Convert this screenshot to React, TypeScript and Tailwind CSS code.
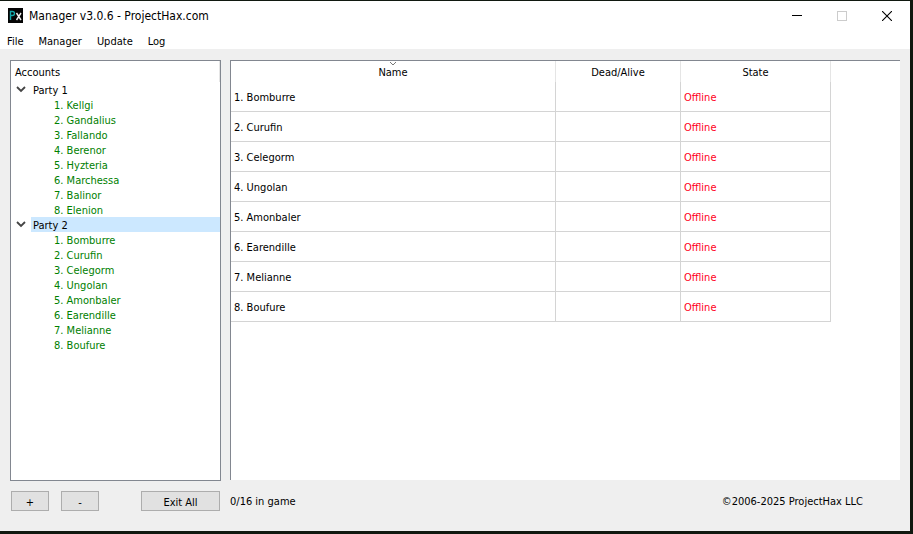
import React from "react";

type Party = { name: string; selected: boolean; members: string[] };

const parties: Party[] = [
  {
    name: "Party 1",
    selected: false,
    members: ["Kellgi", "Gandalius", "Fallando", "Berenor", "Hyzteria", "Marchessa", "Balinor", "Elenion"],
  },
  {
    name: "Party 2",
    selected: true,
    members: ["Bomburre", "Curufin", "Celegorm", "Ungolan", "Amonbaler", "Earendille", "Melianne", "Boufure"],
  },
];

const menus = ["File", "Manager", "Update", "Log"];

function TitleBar() {
  return (
    <header className="flex h-[29px] shrink-0 items-center bg-white pl-2">
      <svg width="15" height="15" viewBox="0 0 15 15" aria-hidden="true">
        <rect width="15" height="15" fill="#050505" />
        <path d="M2.5 12V3.5H4.3Q6.5 3.5 6.5 5.5T4.3 7.5H2.5" fill="none" stroke="#14a8aa" strokeWidth="1.4" />
        <path d="M8.5 5L13 12M13 5L8.5 12" stroke="#f0f0f0" strokeWidth="1.4" />
      </svg>
      <h1 className="ml-1.5 font-['DejaVu_Sans_Condensed','DejaVu_Sans',sans-serif] text-[12px] leading-4">Manager v3.0.6 - ProjectHax.com</h1>
      <div className="ml-auto flex h-full">
        <button type="button" aria-label="Minimize" className="flex w-[45px] items-center justify-center">
          <svg width="10" height="10" shapeRendering="crispEdges"><path d="M0 4.5H10" stroke="#000" /></svg>
        </button>
        <button type="button" aria-label="Maximize" disabled className="flex w-[45px] items-center justify-center">
          <svg width="10" height="10" shapeRendering="crispEdges"><path d="M.5 .5H9.5V9.5H.5Z" fill="none" stroke="#ccc" /></svg>
        </button>
        <button type="button" aria-label="Close" className="flex w-[46px] items-center justify-center">
          <svg width="10" height="10"><path d="M0 0L10 10M10 0L0 10" stroke="#000" strokeWidth="1.1" /></svg>
        </button>
      </div>
    </header>
  );
}

function AccountTree() {
  return (
    <section className="w-[211px] shrink-0 border border-[#828790] bg-white">
      <h2 className="h-[21px] border-r border-[#e5e5e5] pt-1 pl-1">Accounts</h2>
      <ul>
        {parties.map((party) => (
          <li key={party.name}>
            <div className="flex h-[15px] items-center">
              <button type="button" aria-label={"Collapse " + party.name} aria-expanded="true" className="flex h-[15px] w-5 shrink-0 items-center justify-center">
                <svg width="10" height="7" viewBox="0 0 10 7"><path d="M1 1L5 5L9 1" fill="none" stroke="#444" strokeWidth="1.8" /></svg>
              </button>
              <span className={party.selected ? "h-[15px] flex-1 bg-[#cce8ff] pl-0.5 leading-[17px]" : "h-[15px] flex-1 pl-0.5 leading-[17px]"}>{party.name}</span>
            </div>
            <ol>
              {party.members.map((member, i) => (
                <li key={member} className="h-[15px] pl-[43px] leading-[17px] text-[#008000]">{i + 1}. {member}</li>
              ))}
            </ol>
          </li>
        ))}
      </ul>
    </section>
  );
}

function StateTable() {
  return (
    <section className="mb-px min-w-0 flex-1 border-t border-l border-[#828790] bg-white">
      <table className="w-[600px] table-fixed border-separate border-spacing-0">
        <colgroup>
          <col className="w-[325px]" />
          <col className="w-[125px]" />
          <col className="w-[150px]" />
        </colgroup>
        <thead>
          <tr className="h-[21px]">
            <th className="relative border-r border-[#e5e5e5] px-0 pt-0.5 pb-0 font-normal">
              <svg className="absolute top-0 left-1/2 -translate-x-1/2" width="7" height="5" viewBox="0 0 7 5" aria-hidden="true">
                <path d="M.5 1L3.5 4L6.5 1" fill="none" stroke="#777" />
              </svg>
              Name
            </th>
            <th className="border-r border-[#e5e5e5] px-0 pt-0.5 pb-0 font-normal">Dead/Alive</th>
            <th className="border-r border-[#e5e5e5] px-0 pt-0.5 pb-0 font-normal">State</th>
          </tr>
        </thead>
        <tbody>
          {parties[1].members.map((member, i) => (
            <tr key={member} className="h-[30px]">
              <td className="border-r border-b border-[#d4d4d4] pt-0.5 pr-0 pb-0 pl-[3px]">{i + 1}. {member}</td>
              <td className="border-r border-b border-[#d4d4d4] p-0" />
              <td className="border-r border-b border-[#d4d4d4] pt-0.5 pr-0 pb-0 pl-[3px] text-[#ff0022]">Offline</td>
            </tr>
          ))}
        </tbody>
      </table>
    </section>
  );
}

function PushButton({ label, size }: { label: string; size: string }) {
  return (
    <button type="button" className={"flex h-5 items-center justify-center border border-[#adadad] bg-[#e1e1e1] pt-0.5 " + size}>
      {label}
    </button>
  );
}

export default function App() {
  return (
    <div className="h-screen bg-[#10180f] pt-px pr-[3px] pb-[3px] font-['DejaVu_Sans_Condensed','DejaVu_Sans',sans-serif] text-[11px] leading-[15px] text-black">
      <main className="flex h-full flex-col bg-[#efefef]">
        <TitleBar />
        <nav className="flex h-[19px] shrink-0 items-center gap-[15px] bg-white pt-[3px] pl-[7px]">
          {menus.map((menu) => (
            <button key={menu} type="button">{menu}</button>
          ))}
        </nav>
        <div className="flex min-h-0 flex-1 gap-[9px] px-2.5 pt-[11px]">
          <AccountTree />
          <StateTable />
        </div>
        <footer className="flex shrink-0 items-center pt-2.5 pr-[47px] pb-5 pl-[11px]">
          <PushButton label="+" size="w-[38px]" />
          <div className="w-3" />
          <PushButton label="-" size="w-[38px]" />
          <div className="w-[42px]" />
          <PushButton label="Exit All" size="w-[79px]" />
          <span className="ml-2.5">0/16 in game</span>
          <span className="ml-auto">©2006-2025 ProjectHax LLC</span>
        </footer>
      </main>
    </div>
  );
}
